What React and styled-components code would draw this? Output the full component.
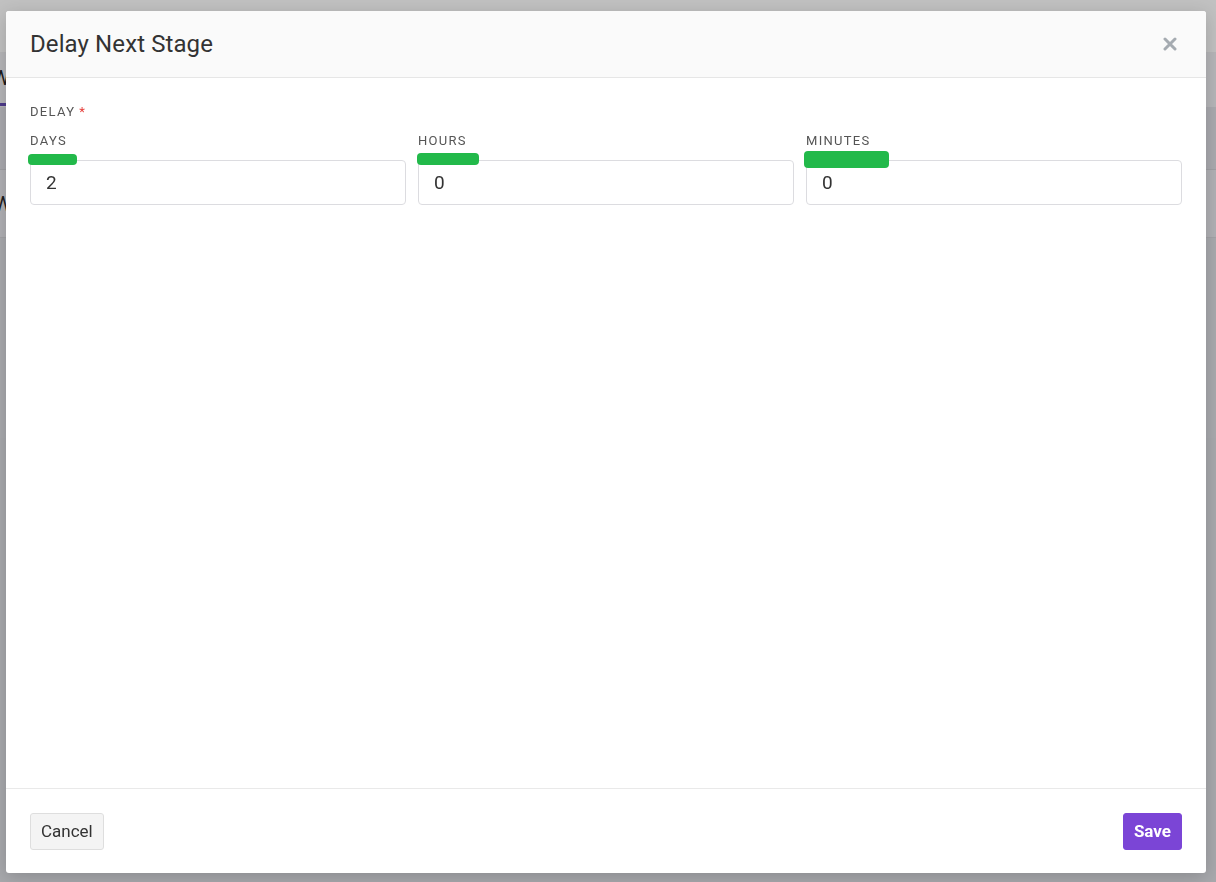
import styled, { createGlobalStyle } from "styled-components";

const GlobalStyle = createGlobalStyle`
  * { box-sizing: border-box; }
  html, body {
    margin: 0;
    padding: 0;
    height: 100%;
    font-family: Roboto, "Liberation Sans", Arial, sans-serif;
    overflow: hidden;
  }
`;

const Page = styled.div`
  height: 100vh;
  display: flex;
  flex-direction: column;
  background: #a8a9ad;
`;

const PageRow = styled.div`
  height: ${(p) => p.$h}px;
  background: ${(p) => p.$bg};
  border-bottom: 1px solid ${(p) => p.$line || "transparent"};
  display: flex;
  align-items: center;
  font-size: 20px;
  color: #1c1c1c;
`;

const PageTab = styled.div`
  align-self: stretch;
  display: flex;
  align-items: center;
  padding: 0 14px 0 0;
  margin-left: -8px;
  border-bottom: 3px solid #4d3a8a;
`;

const PageText = styled.span`
  margin-left: -6px;
`;

const Modal = styled.div`
  position: fixed;
  top: 11px;
  left: 6px;
  width: 1200px;
  height: 862px;
  background: #fff;
  border-radius: 3px;
  box-shadow: 0 4px 18px rgba(0, 0, 0, 0.18);
  display: flex;
  flex-direction: column;
  overflow: hidden;
`;

const Header = styled.header`
  height: 67px;
  flex-shrink: 0;
  background: #fafafa;
  border-bottom: 1px solid #e6e6e6;
  display: flex;
  align-items: center;
  justify-content: space-between;
  padding: 0 29px 0 24px;
`;

const Title = styled.h2`
  margin: 0;
  font-size: 24px;
  font-weight: 400;
  color: #333;
  letter-spacing: 0.1px;
`;

const CloseButton = styled.button`
  border: 0;
  background: none;
  padding: 0;
  width: 14px;
  height: 14px;
  display: flex;
  cursor: pointer;
`;

const Body = styled.div`
  flex: 1;
  padding: 26px 24px 0;
`;

const GroupLabel = styled.div`
  font-size: 13px;
  font-weight: 400;
  line-height: 16px;
  letter-spacing: 1.3px;
  text-transform: uppercase;
  color: #555;
  margin-bottom: 13px;
`;

const Required = styled.span`
  color: #e53935;
  margin-left: 4px;
`;

const FieldRow = styled.div`
  display: grid;
  grid-template-columns: repeat(3, 1fr);
  gap: 12px;
`;

const Field = styled.div`
  display: flex;
  flex-direction: column;
`;

const FieldLabel = styled.label`
  font-size: 13px;
  font-weight: 400;
  line-height: 16px;
  letter-spacing: 1.3px;
  text-transform: uppercase;
  color: #555;
  margin-bottom: 11px;
`;

const InputWrap = styled.div`
  position: relative;
`;

const Input = styled.input`
  width: 100%;
  height: 45px;
  border: 1px solid #dcdce0;
  border-radius: 4px;
  padding: 0 15px;
  font-family: inherit;
  font-size: 19px;
  color: #333;
  background: #fff;
  outline: none;
`;

const Marker = styled.span`
  position: absolute;
  left: ${(p) => p.$left}px;
  top: ${(p) => p.$top}px;
  width: ${(p) => p.$w}px;
  height: ${(p) => p.$h}px;
  background: #22b94a;
  border-radius: 4px;
`;

const Footer = styled.footer`
  height: 85px;
  flex-shrink: 0;
  border-top: 1px solid #e9e9e9;
  display: flex;
  align-items: flex-start;
  justify-content: space-between;
  padding: 24px 24px 0;
`;

const Button = styled.button`
  height: 37px;
  padding: 0 10px 1px;
  font-family: inherit;
  font-size: 17px;
  font-weight: ${(p) => (p.$primary ? 700 : 400)};
  color: ${(p) => (p.$primary ? "#fff" : "#333")};
  background: ${(p) => (p.$primary ? "#7b45d6" : "#f4f4f4")};
  border: 1px solid ${(p) => (p.$primary ? "#7b45d6" : "#dedede")};
  border-radius: 3px;
  cursor: pointer;
`;

const fields = [
  { label: "Days", value: "2", marker: { left: -2, top: -6, w: 49, h: 11 } },
  { label: "Hours", value: "0", marker: { left: -1, top: -7, w: 62, h: 12 } },
  { label: "Minutes", value: "0", marker: { left: -2, top: -9, w: 85, h: 17 } },
];

export default function App() {
  return (
    <>
      <GlobalStyle />
      <Page>
        <PageRow $h={53} $bg="#c1c1c1" $line="#b6b6b8" />
        <PageRow $h={54} $bg="#b6b6b9">
          <PageTab>Workflow</PageTab>
        </PageRow>
        <PageRow $h={63} $bg="#aaaaaf" $line="#a0a0a4" />
        <PageRow $h={68} $bg="#b1b1b5" $line="#a3a3a7">
          <PageText>Wait</PageText>
        </PageRow>
        <PageRow $h={200} $bg="#a9aaae" />
      </Page>

      <Modal role="dialog">
        <Header>
          <Title>Delay Next Stage</Title>
          <CloseButton aria-label="Close">
            <svg width="14" height="14" viewBox="0 0 14 14">
              <path
                d="M2 2 L12 12 M12 2 L2 12"
                stroke="#a5abb1"
                strokeWidth="3"
                strokeLinecap="round"
              />
            </svg>
          </CloseButton>
        </Header>

        <Body>
          <GroupLabel>
            Delay<Required>*</Required>
          </GroupLabel>
          <FieldRow>
            {fields.map((f) => (
              <Field key={f.label}>
                <FieldLabel>{f.label}</FieldLabel>
                <InputWrap>
                  <Input defaultValue={f.value} />
                  <Marker
                    $left={f.marker.left}
                    $top={f.marker.top}
                    $w={f.marker.w}
                    $h={f.marker.h}
                  />
                </InputWrap>
              </Field>
            ))}
          </FieldRow>
        </Body>

        <Footer>
          <Button>Cancel</Button>
          <Button $primary>Save</Button>
        </Footer>
      </Modal>
    </>
  );
}
